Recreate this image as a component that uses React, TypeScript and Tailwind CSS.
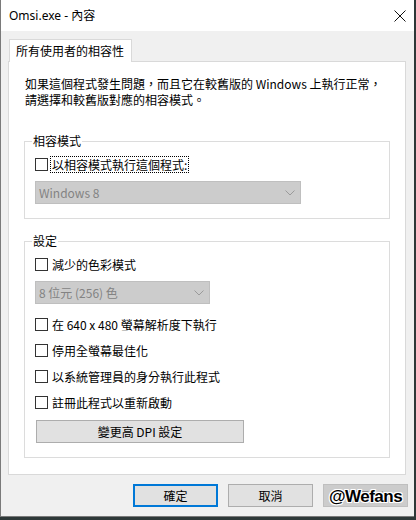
import React from 'react';

const ui = "font-['Noto_Sans_CJK_TC','Noto_Sans',sans-serif]";

function Check(props: { label: string; focused?: boolean; className?: string }) {
	return (
		<div className={`flex h-[17px] items-center ${props.className ?? ''}`}>
			<span className="h-[13px] w-[13px] shrink-0 border border-[#333333] bg-white" />
			<span
				className={`ml-[2px] h-[17px] border px-[1px] leading-[15px] ${
					props.focused ? 'border-dotted border-black' : 'border-transparent'
				}`}
			>
				{props.label}
			</span>
		</div>
	);
}

function Select(props: { value: string; className?: string }) {
	return (
		<div
			className={`flex h-[23px] items-center justify-between border border-[#bfbfbf] bg-[#cccccc] pl-[3px] pr-[5px] text-[#838383] ${props.className ?? ''}`}
		>
			<span className="leading-[16px]">{props.value}</span>
			<svg width="10" height="6" viewBox="0 0 10 6" className="text-[#9a9a9a]">
				<polyline points="0.5,0.5 5,5 9.5,0.5" fill="none" stroke="currentColor" strokeWidth="1" />
			</svg>
		</div>
	);
}

function Group(props: { title: string; children: React.ReactNode; className?: string }) {
	return (
		<fieldset className={`border border-[#dcdcdc] ${props.className ?? ''}`}>
			<legend className="ml-[7px] px-[1px] leading-[16px]">{props.title}</legend>
			<div className="pb-[14px] pl-[10px]">{props.children}</div>
		</fieldset>
	);
}

function Btn(props: { label: string; primary?: boolean; disabled?: boolean; children?: React.ReactNode }) {
	let cls = 'border border-[#adadad] bg-[#e1e1e1] text-black';
	if (props.primary) cls = 'border-2 border-[#0078d7] bg-[#e1e1e1] text-black';
	if (props.disabled) cls = 'border border-[#bfbfbf] bg-[#cccccc] text-[#838383]';
	return (
		<div className={`relative flex h-[23px] w-[85px] items-center justify-center leading-[16px] ${cls}`}>
			{props.label}
			{props.children}
		</div>
	);
}

export default function App() {
	return (
		<div className={`h-[520px] w-[416px] bg-[#2e3838] text-[12px] text-black ${ui}`}>
			<div className="h-[517px] w-[414px] border-b border-l border-[#7a7a7a] bg-[#f0f0f0]">
				{/* title bar */}
				<div className="flex h-[31px] items-center justify-between bg-white pl-[8px] pr-[8px]">
					<span className="font-['Noto_Sans','Noto_Sans_CJK_TC',sans-serif] text-[12px] leading-[16px]">
						Omsi.exe - 內容
					</span>
					<svg width="12" height="12" viewBox="0 0 12 12">
						<path d="M0.5 0.5 L11.5 11.5 M11.5 0.5 L0.5 11.5" stroke="#111" strokeWidth="1" />
					</svg>
				</div>

				{/* tabs */}
				<div className="flex pl-[8px] pt-[8px]">
					<div className="relative z-10 -mb-[1px] flex h-[23px] w-[123px] items-center border border-b-0 border-[#d9d9d9] bg-white pl-[6px] leading-[16px]">
						所有使用者的相容性
					</div>
				</div>

				<div className="ml-[7px] h-[414px] w-[398px] border border-[#d9d9d9] bg-white px-[15px] pt-[14px]">
					<p className="ml-[1px] leading-[16px]">
						如果這個程式發生問題，而且它在較舊版的 Windows 上執行正常，
						<br />
						請選擇和較舊版對應的相容模式。
					</p>

					<Group title="相容模式" className="mt-[25px]">
						<Check label="以相容模式執行這個程式:" focused className="mt-[7px]" />
						<Select value="Windows 8" className="mt-[8px] w-[266px]" />
					</Group>

					<Group title="設定" className="mt-[14px]">
						<Check label="減少的色彩模式" className="mt-[7px]" />
						<Select value="8 位元 (256) 色" className="mt-[8px] w-[175px]" />
						<Check label="在 640 x 480 螢幕解析度下執行" className="mt-[12px]" />
						<Check label="停用全螢幕最佳化" className="mt-[9px]" />
						<Check label="以系統管理員的身分執行此程式" className="mt-[9px]" />
						<Check label="註冊此程式以重新啟動" className="mt-[9px]" />
						<div className="ml-[1px] mt-[9px] flex h-[23px] w-[208px] items-center justify-center border border-[#adadad] bg-[#e1e1e1] leading-[16px]">
							變更高 DPI 設定
						</div>
					</Group>
				</div>

				{/* dialog buttons */}
				<div className="mt-[9px] flex justify-end gap-[10px] pr-[6px]">
					<Btn label="確定" primary />
					<Btn label="取消" />
					<Btn label="套用(A)" disabled>
						<span className="absolute inset-0 flex items-center justify-center pt-[2px] font-['Liberation_Sans',sans-serif] text-[17px] font-bold tracking-[-0.5px] text-black [text-shadow:1px_0_#fff,-1px_0_#fff,0_1px_#fff,0_-1px_#fff,1px_1px_#fff,-1px_-1px_#fff,1px_-1px_#fff,-1px_1px_#fff]">
							@Wefans
						</span>
					</Btn>
				</div>
			</div>
		</div>
	);
}
